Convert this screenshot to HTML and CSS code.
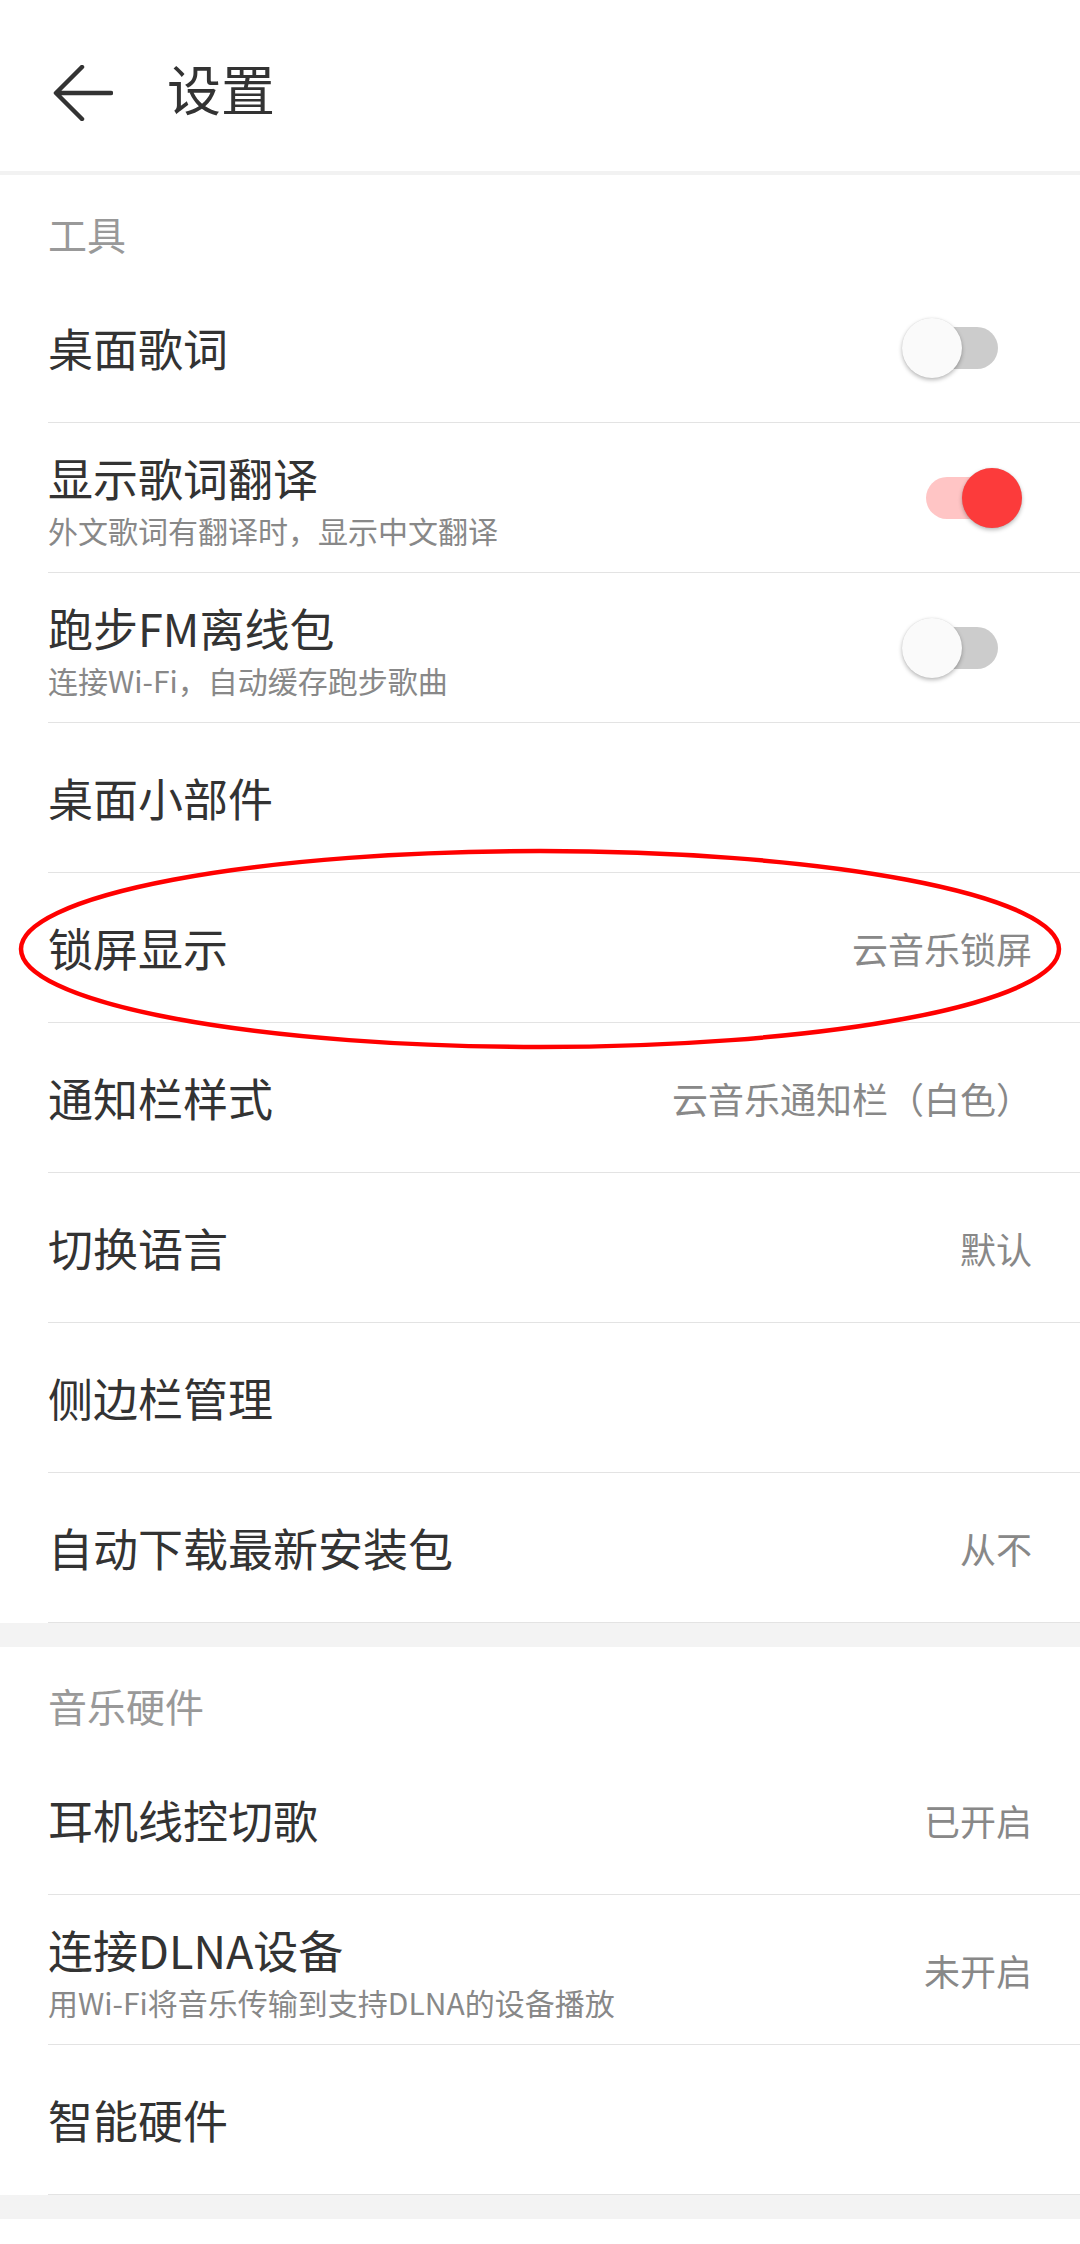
FILE: index.html
```html
<!DOCTYPE html>
<html lang="zh-CN">
<head>
<meta charset="utf-8">
<title>设置</title>
<link rel="stylesheet" href="styles.css">
</head>
<body>
<header class="topbar">
  <svg class="back" viewBox="0 0 60 56" width="60" height="56">
    <path d="M4 28 H58 M29 2 L3 28 L29 54" fill="none" stroke="#333" stroke-width="4.5" stroke-linecap="round" stroke-linejoin="round"/>
  </svg>
  <h1 class="title">设置</h1>
</header>
<div class="topline"></div>

<section class="group">
  <div class="group-title">工具</div>
  <div class="row">
    <div class="label"><div class="main">桌面歌词</div></div>
    <div class="switch"><span class="track"></span><span class="knob"></span></div>
  </div>
  <div class="row">
    <div class="label"><div class="main">显示歌词翻译</div><div class="sub">外文歌词有翻译时，显示中文翻译</div></div>
    <div class="switch on"><span class="track"></span><span class="knob"></span></div>
  </div>
  <div class="row">
    <div class="label"><div class="main">跑步FM离线包</div><div class="sub">连接Wi-Fi，自动缓存跑步歌曲</div></div>
    <div class="switch"><span class="track"></span><span class="knob"></span></div>
  </div>
  <div class="row">
    <div class="label"><div class="main">桌面小部件</div></div>
  </div>
  <div class="row">
    <div class="label"><div class="main">锁屏显示</div></div>
    <div class="value">云音乐锁屏</div>
  </div>
  <div class="row">
    <div class="label"><div class="main">通知栏样式</div></div>
    <div class="value">云音乐通知栏（白色）</div>
  </div>
  <div class="row">
    <div class="label"><div class="main">切换语言</div></div>
    <div class="value">默认</div>
  </div>
  <div class="row">
    <div class="label"><div class="main">侧边栏管理</div></div>
  </div>
  <div class="row">
    <div class="label"><div class="main">自动下载最新安装包</div></div>
    <div class="value">从不</div>
  </div>
</section>
<div class="gap"></div>

<section class="group">
  <div class="group-title">音乐硬件</div>
  <div class="row">
    <div class="label"><div class="main">耳机线控切歌</div></div>
    <div class="value">已开启</div>
  </div>
  <div class="row">
    <div class="label"><div class="main">连接DLNA设备</div><div class="sub">用Wi-Fi将音乐传输到支持DLNA的设备播放</div></div>
    <div class="value">未开启</div>
  </div>
  <div class="row">
    <div class="label"><div class="main">智能硬件</div></div>
  </div>
</section>
<div class="gap"></div>

<svg class="annotation" viewBox="0 0 1080 2244" width="1080" height="2244">
  <ellipse cx="540" cy="949" rx="519" ry="98" fill="none" stroke="#ff0000" stroke-width="4.5"/>
</svg>
</body>
</html>
```

FILE: styles.css
```css
* { box-sizing: border-box; }
html, body { margin: 0; padding: 0; }
body {
  position: relative;
  width: 1080px;
  min-height: 2244px;
  background: #ffffff;
  font-family: "Noto Sans CJK SC", "Noto Sans", sans-serif;
  color: #333333;
}
.topbar {
  height: 171px;
  padding-top: 15px;
  display: flex;
  align-items: center;
}
.back {
  display: block;
  margin-left: 53px;
  flex: none;
}
.title {
  margin: 0 0 10px 54px;
  font-size: 54px;
  font-weight: 400;
  line-height: 64px;
  color: #333333;
}
.topline {
  height: 4px;
  background: #f2f2f2;
}
.group-title {
  height: 98px;
  padding: 38px 0 0 48px;
  font-size: 39px;
  line-height: 40px;
  color: #999999;
}
.row {
  margin-left: 48px;
  height: 150px;
  border-bottom: 1px solid #e3e3e3;
  padding-right: 48px;
  display: flex;
  align-items: center;
  justify-content: space-between;
}
.label { display: flex; flex-direction: column; }
.main {
  font-size: 45px;
  line-height: 64px;
  color: #333333;
}
.sub {
  font-size: 30px;
  line-height: 40px;
  color: #888888;
}
.value {
  font-size: 36px;
  line-height: 48px;
  color: #888888;
}
.gap {
  height: 24px;
  background: #f3f3f3;
}
.switch {
  position: relative;
  width: 120px;
  height: 64px;
  margin-right: 10px;
  flex: none;
}
.track {
  position: absolute;
  left: 24px;
  top: 11px;
  width: 72px;
  height: 42px;
  border-radius: 21px;
  background: #cccccc;
}
.knob {
  position: absolute;
  left: 0;
  top: 2px;
  width: 60px;
  height: 60px;
  border-radius: 50%;
  background: #fafafa;
  box-shadow: 0 2px 4px rgba(0, 0, 0, 0.28), 0 0 1px rgba(0, 0, 0, 0.12);
}
.switch.on .track { background: #ffc5c5; }
.switch.on .knob {
  left: 60px;
  background: #fc3b3b;
}
.annotation {
  position: absolute;
  top: 0;
  left: 0;
  pointer-events: none;
}
```
